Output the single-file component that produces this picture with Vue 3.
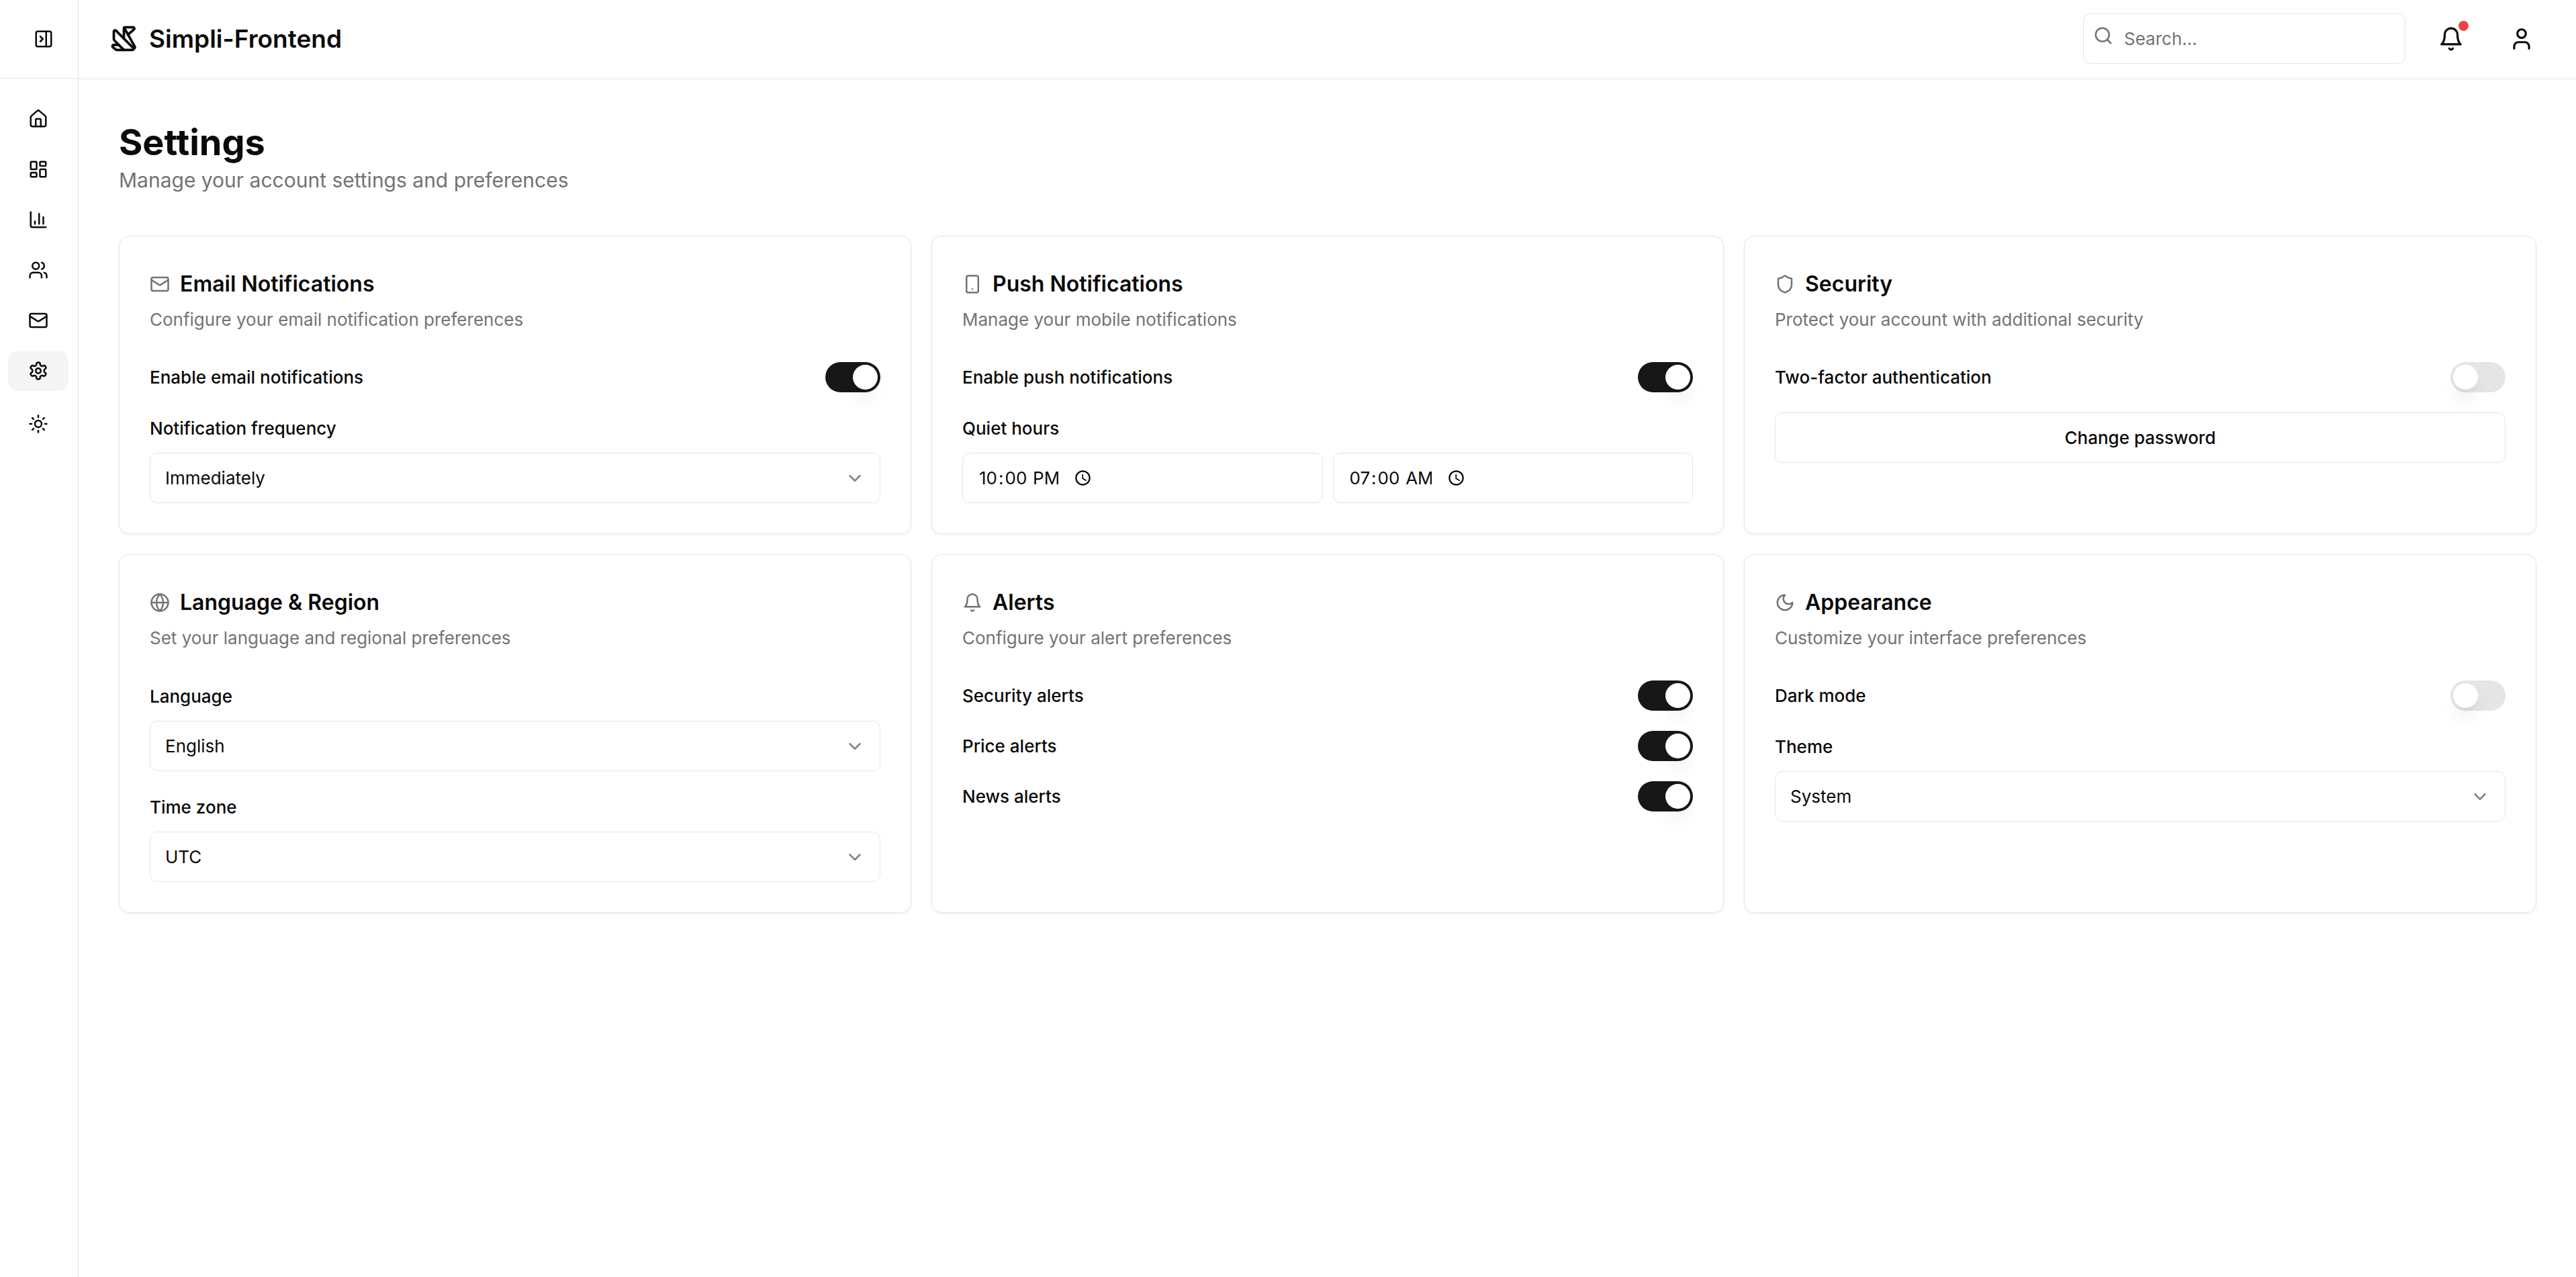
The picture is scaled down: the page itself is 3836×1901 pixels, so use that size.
<script setup>
import { h, ref } from 'vue'

const shapes = {
  panel: '<rect width="18" height="18" x="3" y="3" rx="2"/><path d="M15 3v18"/><path d="m8 9 3 3-3 3"/>',
  origami: '<path d="M12 12V4a1 1 0 0 1 1-1h6.297a1 1 0 0 1 .651 1.759l-4.696 4.025"/><path d="m12 21-7.414-7.414A2 2 0 0 1 4 12.172V6.415a1.002 1.002 0 0 1 1.707-.707L20 20.009"/><path d="m12.214 3.381 8.414 14.966a1 1 0 0 1-.167 1.199l-1.168 1.163a1 1 0 0 1-.706.291H6.351a1 1 0 0 1-.625-.219L3.25 18.8a1 1 0 0 1 .631-1.781l4.165.027"/>',
  home: '<path d="M15 21v-8a1 1 0 0 0-1-1h-4a1 1 0 0 0-1 1v8"/><path d="M3 10a2 2 0 0 1 .709-1.528l7-5.999a2 2 0 0 1 2.582 0l7 5.999A2 2 0 0 1 21 10v9a2 2 0 0 1-2 2H5a2 2 0 0 1-2-2z"/>',
  dashboard: '<rect width="7" height="9" x="3" y="3" rx="1"/><rect width="7" height="5" x="14" y="3" rx="1"/><rect width="7" height="9" x="14" y="12" rx="1"/><rect width="7" height="5" x="3" y="16" rx="1"/>',
  chart: '<path d="M3 3v16a2 2 0 0 0 2 2h16"/><path d="M18 17V9"/><path d="M13 17V5"/><path d="M8 17v-3"/>',
  users: '<path d="M16 21v-2a4 4 0 0 0-4-4H6a4 4 0 0 0-4 4v2"/><circle cx="9" cy="7" r="4"/><path d="M22 21v-2a4 4 0 0 0-3-3.87"/><path d="M16 3.13a4 4 0 0 1 0 7.75"/>',
  mail: '<rect width="20" height="16" x="2" y="4" rx="2"/><path d="m22 7-8.97 5.7a1.94 1.94 0 0 1-2.06 0L2 7"/>',
  settings: '<path d="M12.22 2h-.44a2 2 0 0 0-2 2v.18a2 2 0 0 1-1 1.73l-.43.25a2 2 0 0 1-2 0l-.15-.08a2 2 0 0 0-2.73.73l-.22.38a2 2 0 0 0 .73 2.73l.15.1a2 2 0 0 1 1 1.72v.51a2 2 0 0 1-1 1.74l-.15.09a2 2 0 0 0-.73 2.73l.22.38a2 2 0 0 0 2.73.73l.15-.08a2 2 0 0 1 2 0l.43.25a2 2 0 0 1 1 1.73V20a2 2 0 0 0 2 2h.44a2 2 0 0 0 2-2v-.18a2 2 0 0 1 1-1.73l.43-.25a2 2 0 0 1 2 0l.15.08a2 2 0 0 0 2.73-.73l.22-.39a2 2 0 0 0-.73-2.73l-.15-.08a2 2 0 0 1-1-1.74v-.5a2 2 0 0 1 1-1.74l.15-.09a2 2 0 0 0 .73-2.73l-.22-.38a2 2 0 0 0-2.73-.73l-.15.08a2 2 0 0 1-2 0l-.43-.25a2 2 0 0 1-1-1.73V4a2 2 0 0 0-2-2z"/><circle cx="12" cy="12" r="3"/>',
  sun: '<circle cx="12" cy="12" r="4"/><path d="M12 2v2"/><path d="M12 20v2"/><path d="m4.93 4.93 1.41 1.41"/><path d="m17.66 17.66 1.41 1.41"/><path d="M2 12h2"/><path d="M20 12h2"/><path d="m6.34 17.66-1.41 1.41"/><path d="m19.07 4.93-1.41 1.41"/>',
  search: '<circle cx="11" cy="11" r="8"/><path d="m21 21-4.3-4.3"/>',
  bell: '<path d="M6 8a6 6 0 0 1 12 0c0 7 3 9 3 9H3s3-2 3-9"/><path d="M10.3 21a1.94 1.94 0 0 0 3.4 0"/>',
  user: '<path d="M19 21v-2a4 4 0 0 0-4-4H9a4 4 0 0 0-4 4v2"/><circle cx="12" cy="7" r="4"/>',
  phone: '<rect width="14" height="20" x="5" y="2" rx="2"/><path d="M12 18h.01"/>',
  shield: '<path d="M20 13c0 5-3.5 7.5-7.66 8.95a1 1 0 0 1-.67-.01C7.5 20.5 4 18 4 13V6a1 1 0 0 1 1-1c2 0 4.5-1.2 6.24-2.72a1.17 1.17 0 0 1 1.52 0C14.51 3.81 17 5 19 5a1 1 0 0 1 1 1z"/>',
  globe: '<circle cx="12" cy="12" r="10"/><path d="M12 2a14.5 14.5 0 0 0 0 20 14.5 14.5 0 0 0 0-20"/><path d="M2 12h20"/>',
  moon: '<path d="M12 3a6 6 0 0 0 9 9 9 9 0 1 1-9-9Z"/>',
  chevron: '<path d="m6 9 6 6 6-6"/>',
}

const Icon = (props) =>
  h('svg', {
    viewBox: '0 0 24 24',
    fill: 'none',
    stroke: 'currentColor',
    'stroke-width': 2,
    'stroke-linecap': 'round',
    'stroke-linejoin': 'round',
    'aria-hidden': 'true',
    innerHTML: shapes[props.name],
  })
Icon.props = ['name']

const nav = [
  { icon: 'home', label: 'Home' },
  { icon: 'dashboard', label: 'Dashboard' },
  { icon: 'chart', label: 'Analytics' },
  { icon: 'users', label: 'Users' },
  { icon: 'mail', label: 'Messages' },
  { icon: 'settings', label: 'Settings', active: true },
]

const query = ref('')

const cards = ref([
  {
    icon: 'mail',
    title: 'Email Notifications',
    text: 'Configure your email notification preferences',
    fields: [
      { type: 'switch', id: 'email-on', label: 'Enable email notifications', value: true },
      { type: 'select', id: 'frequency', label: 'Notification frequency', value: 'Immediately', options: ['Immediately', 'Daily', 'Weekly'] },
    ],
  },
  {
    icon: 'phone',
    title: 'Push Notifications',
    text: 'Manage your mobile notifications',
    fields: [
      { type: 'switch', id: 'push-on', label: 'Enable push notifications', value: true },
      { type: 'times', id: 'quiet', label: 'Quiet hours', from: '22:00', to: '07:00' },
    ],
  },
  {
    icon: 'shield',
    title: 'Security',
    text: 'Protect your account with additional security',
    fields: [
      { type: 'switch', id: 'two-factor', label: 'Two-factor authentication', value: false },
      { type: 'button', id: 'password', label: 'Change password' },
    ],
  },
  {
    icon: 'globe',
    title: 'Language & Region',
    text: 'Set your language and regional preferences',
    fields: [
      { type: 'select', id: 'language', label: 'Language', value: 'English', options: ['English', 'Spanish', 'French'] },
      { type: 'select', id: 'zone', label: 'Time zone', value: 'UTC', options: ['UTC', 'EST', 'PST'] },
    ],
  },
  {
    icon: 'bell',
    title: 'Alerts',
    text: 'Configure your alert preferences',
    fields: [
      { type: 'switch', id: 'security-alerts', label: 'Security alerts', value: true },
      { type: 'switch', id: 'price-alerts', label: 'Price alerts', value: true },
      { type: 'switch', id: 'news-alerts', label: 'News alerts', value: true },
    ],
  },
  {
    icon: 'moon',
    title: 'Appearance',
    text: 'Customize your interface preferences',
    fields: [
      { type: 'switch', id: 'dark', label: 'Dark mode', value: false },
      { type: 'select', id: 'theme', label: 'Theme', value: 'System', options: ['System', 'Light', 'Dark'] },
    ],
  },
])
</script>

<template>
  <div class="app">
    <aside class="sidebar">
      <div class="sidebar-top">
        <button class="icon-button" type="button" aria-label="Expand sidebar">
          <Icon class="icon" name="panel" />
        </button>
      </div>
      <nav class="nav">
        <a
          v-for="item in nav"
          :key="item.label"
          href="#"
          class="nav-item"
          :class="{ active: item.active }"
          :aria-label="item.label"
        >
          <Icon class="icon" :name="item.icon" />
        </a>
        <button class="nav-item theme" type="button" aria-label="Toggle theme">
          <Icon class="icon" name="sun" />
        </button>
      </nav>
    </aside>

    <div class="page">
      <header class="header">
        <a href="#" class="brand">
          <Icon class="logo" name="origami" />
          <span>Simpli-Frontend</span>
        </a>
        <div class="tools">
          <div class="search">
            <Icon class="icon search-icon" name="search" />
            <input v-model="query" class="control search-input" type="search" placeholder="Search..." aria-label="Search" />
          </div>
          <button class="icon-button" type="button" aria-label="Notifications">
            <Icon class="icon-lg" name="bell" />
            <span class="dot"></span>
          </button>
          <button class="icon-button" type="button" aria-label="Account">
            <Icon class="icon-lg" name="user" />
          </button>
        </div>
      </header>

      <main class="main">
        <div class="intro">
          <h1>Settings</h1>
          <p>Manage your account settings and preferences</p>
        </div>

        <div class="grid">
          <section v-for="card in cards" :key="card.title" class="card">
            <div class="card-head">
              <div class="card-title">
                <Icon class="icon" :name="card.icon" />
                <h2>{{ card.title }}</h2>
              </div>
              <p>{{ card.text }}</p>
            </div>
            <div class="card-body">
              <template v-for="field in card.fields" :key="field.id">
                <div v-if="field.type === 'switch'" class="row">
                  <label :for="field.id">{{ field.label }}</label>
                  <input :id="field.id" v-model="field.value" class="switch" type="checkbox" role="switch" />
                </div>
                <div v-else-if="field.type === 'select'" class="field">
                  <label :for="field.id">{{ field.label }}</label>
                  <div class="select">
                    <select :id="field.id" v-model="field.value" class="control">
                      <option v-for="option in field.options" :key="option">{{ option }}</option>
                    </select>
                    <Icon class="icon chevron" name="chevron" />
                  </div>
                </div>
                <div v-else-if="field.type === 'times'" class="field">
                  <label :for="field.id">{{ field.label }}</label>
                  <div class="times">
                    <input :id="field.id" v-model="field.from" class="control time" type="time" />
                    <input v-model="field.to" class="control time" type="time" aria-label="Quiet hours end" />
                  </div>
                </div>
                <button v-else class="control action" type="button">{{ field.label }}</button>
              </template>
            </div>
          </section>
        </div>
      </main>
    </div>
  </div>
</template>

<style>
body {
  background: #fff;
}
</style>

<style scoped>
* {
  box-sizing: border-box;
}

.app {
  display: flex;
  min-height: 100vh;
  background: #fff;
  color: #0a0a0a;
  font-family: Inter, 'Liberation Sans', sans-serif;
  font-size: 26px;
  line-height: 38px;
}

h1,
h2,
p {
  margin: 0;
}

a {
  color: inherit;
  text-decoration: none;
}

button,
input,
select {
  margin: 0;
  color: inherit;
  font: inherit;
}

.icon {
  flex: none;
  width: 30px;
  height: 30px;
}

.icon-lg {
  flex: none;
  width: 38px;
  height: 38px;
}

.icon-button {
  position: relative;
  display: flex;
  align-items: center;
  justify-content: center;
  width: 75px;
  height: 75px;
  padding: 0;
  border: 0;
  border-radius: 11px;
  background: none;
}

.sidebar {
  flex: none;
  width: 117px;
  border-right: 1px solid #e5e5e5;
}

.sidebar-top {
  padding: 20px 0 21px 27px;
  border-bottom: 1px solid #e5e5e5;
}

.nav {
  display: flex;
  flex-direction: column;
  gap: 15px;
  padding: 30px 14px 30px 12px;
}

.nav-item {
  display: flex;
  align-items: center;
  justify-content: center;
  height: 60px;
  padding: 0;
  border: 0;
  border-radius: 15px;
  background: none;
}

.nav-item.active {
  background: #f5f5f5;
}

.nav-item.theme {
  height: 68px;
}

.page {
  flex: 1;
  min-width: 0;
}

.header {
  display: flex;
  align-items: center;
  justify-content: space-between;
  padding: 20px 44px 22px 45px;
  border-bottom: 1px solid #e5e5e5;
}

.brand {
  display: flex;
  align-items: center;
  gap: 15px;
  font-size: 37px;
  font-weight: 600;
  line-height: 52px;
}

.logo {
  flex: none;
  width: 45px;
  height: 45px;
}

.tools {
  display: flex;
  align-items: center;
  gap: 30px;
}

.dot {
  position: absolute;
  top: 11px;
  right: 11px;
  width: 15px;
  height: 15px;
  border-radius: 50%;
  background: #ef4444;
}

.control {
  display: block;
  width: 100%;
  height: 75px;
  padding: 0 22px;
  border: 1px solid #e5e5e5;
  border-radius: 11px;
  background: #fff;
  appearance: none;
}

.search {
  position: relative;
  width: 480px;
}

.search-icon {
  position: absolute;
  top: 18px;
  left: 15px;
  color: #737373;
}

.search-input {
  padding-left: 60px;
}

.search-input::placeholder {
  color: #737373;
  opacity: 1;
}

.main {
  padding: 60px 59px 60px 60px;
}

.intro {
  margin-bottom: 60px;
}

.intro h1 {
  font-size: 54px;
  font-weight: 700;
  line-height: 68px;
}

.intro p {
  color: #737373;
  font-size: 30px;
  line-height: 45px;
}

.grid {
  display: grid;
  grid-template-columns: repeat(3, minmax(0, 1fr));
  gap: 30px;
}

.card {
  padding: 45px;
  border: 1px solid #e5e5e5;
  border-radius: 15px;
  background: #fff;
  box-shadow: 0 2px 4px rgba(0, 0, 0, 0.05);
}

.card-head {
  display: flex;
  flex-direction: column;
  gap: 8px;
  margin-bottom: 44px;
  color: #737373;
}

.card-title {
  display: flex;
  align-items: center;
  gap: 15px;
}

.card-title h2 {
  color: #0a0a0a;
  font-size: 32px;
  font-weight: 600;
  line-height: 52px;
}

.card-body {
  display: flex;
  flex-direction: column;
  gap: 30px;
}

label {
  font-weight: 500;
  line-height: 45px;
}

.row {
  display: flex;
  align-items: center;
  justify-content: space-between;
}

.field {
  display: flex;
  flex-direction: column;
  gap: 13px;
}

.field label {
  line-height: 47px;
}

.switch {
  width: 82px;
  height: 45px;
  padding: 4px;
  border-radius: 23px;
  background: #e5e5e5;
  appearance: none;
}

.switch::before {
  content: '';
  display: block;
  width: 37px;
  height: 37px;
  border-radius: 50%;
  background: #fff;
  box-shadow:
    0 19px 28px -6px rgba(0, 0, 0, 0.1),
    0 8px 11px -8px rgba(0, 0, 0, 0.1);
}

.switch:checked {
  background: #171717;
}

.switch:checked::before {
  margin-left: auto;
}

.select {
  position: relative;
}

.chevron {
  position: absolute;
  top: 23px;
  right: 23px;
  opacity: 0.5;
  pointer-events: none;
}

.times {
  display: grid;
  grid-template-columns: 1fr 1fr;
  gap: 15px;
}

.time {
  display: flex;
}

.time::-webkit-datetime-edit {
  flex: none;
}

.time::-webkit-datetime-edit-hour-field,
.time::-webkit-datetime-edit-minute-field,
.time::-webkit-datetime-edit-ampm-field {
  padding: 0 2px;
}

.time::-webkit-calendar-picker-indicator {
  margin-left: 20px;
}

.action {
  font-weight: 500;
  text-align: center;
}

@media (max-width: 1800px) {
  .grid {
    grid-template-columns: repeat(2, minmax(0, 1fr));
  }
}

@media (max-width: 1200px) {
  .grid {
    grid-template-columns: minmax(0, 1fr);
  }
}
</style>
